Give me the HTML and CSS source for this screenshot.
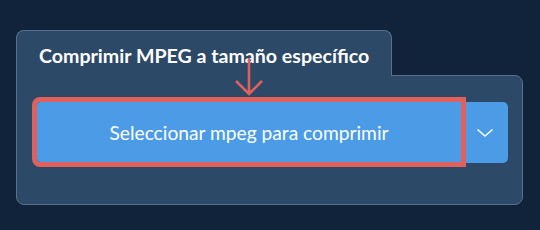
FILE: index.html
```html
<!DOCTYPE html>
<html lang="es">
<head>
    <meta charset="UTF-8">
    <meta name="viewport" content="width=device-width, initial-scale=1.0">
    <title>Comprimir MPEG</title>
    <link rel="stylesheet" href="styles.css">
</head>
<body>

    <div class="widget">
        <div class="tab">
            <h2>Comprimir MPEG a tamaño específico</h2>
        </div>
        <div class="panel">
            <div class="btn-group">
                <button class="btn-main">Seleccionar mpeg para comprimir</button>
                <button class="btn-drop" aria-label="Más opciones">
                    <svg width="18" height="10" viewBox="0 0 18 10">
                        <path d="M1.5 1.5 L9 8 L16.5 1.5" fill="none" stroke="#fff" stroke-width="1.5"/>
                    </svg>
                </button>
            </div>
            <svg class="hint-arrow" width="30" height="40" viewBox="0 0 30 40">
                <path d="M15 0 V36 M2 23 L15 36 L28 23" fill="none" stroke="#e0605c" stroke-width="2.6"/>
            </svg>
        </div>
    </div>

</body>
</html>
```

FILE: styles.css
```css
body {
    margin: 0;
    padding: 30px 0 0 16px;
    background-color: #10233a;
    font-family: Lato, "Open Sans", sans-serif;
    height: 230px;
    box-sizing: border-box;
    overflow: hidden;
}

.widget {
    width: 507px;
}

.tab {
    position: relative;
    z-index: 1;
    width: 376px;
    height: 46px;
    box-sizing: border-box;
    background: #2c4968;
    border: 1px solid #57718f;
    border-bottom: none;
    border-radius: 8px 8px 0 0;
    padding: 13px 0 0 22px;
    margin-bottom: -1px;
}

.tab h2 {
    margin: 0;
    font-size: 19.6px;
    font-weight: bold;
    color: #fff;
    line-height: 24px;
}

.panel {
    position: relative;
    height: 130px;
    box-sizing: border-box;
    background: #2c4968;
    border: 1px solid #57718f;
    border-radius: 0 8px 8px 8px;
    padding: 26px 0 0 20px;
}

.btn-group {
    display: flex;
    height: 60px;
}

.btn-main {
    width: 424px;
    height: 60px;
    background: #4c9be6;
    color: #fff;
    border: none;
    border-radius: 3px 0 0 3px;
    outline: 5px solid #df605c;
    font-family: Lato, "Open Sans", sans-serif;
    font-size: 19.2px;
    padding: 0;
    position: relative;
    z-index: 1;
}

.btn-drop {
    width: 47px;
    height: 61px;
    background: #4c9be6;
    border: none;
    border-radius: 0 5px 5px 0;
    padding: 0;
    display: flex;
    align-items: center;
    justify-content: center;
}

.hint-arrow {
    position: absolute;
    left: 217px;
    top: -18px;
    z-index: 2;
}
```
